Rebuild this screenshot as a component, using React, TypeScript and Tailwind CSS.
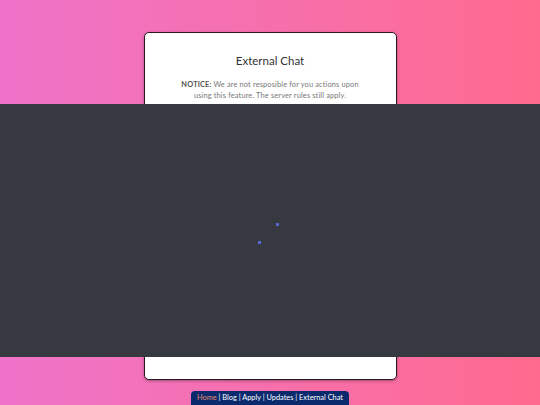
export default function App() {
  return (
    <div
      className="relative h-[405px] w-[540px] overflow-hidden bg-gradient-to-r from-[#ee73c9] to-[#ff6a8e]"
      style={{ fontFamily: 'Lato, "Noto Sans", sans-serif' }}
    >
      <div className="flex flex-col items-center pt-[32px]">
        {/* card */}
        <div className="h-[348px] w-[253px] rounded-[5px] border-[1.5px] border-[#2a1724] bg-white px-[28px] pt-[21px] text-center shadow-[0_1px_3px_rgba(0,0,0,0.35)]">
          <h1 className="text-[11.5px] leading-[14px] text-[#333]">External Chat</h1>
          <p className="mt-[11px] text-[7.4px] leading-[11px] tracking-[0.15px] text-[#777]">
            <span className="font-bold text-[#555]">NOTICE:</span> We are not resposible for you actions upon using this feature. The server rules still apply.
          </p>
        </div>

        {/* footer nav */}
        <div className="mt-[11px] flex h-[16px] items-start rounded-t-[4px] bg-[#0b2a6e] px-[6px] pt-[2px] text-[7.4px] leading-[10px] text-white">
          <span className="text-[#e2876a]">Home</span>
          <span>&nbsp;| Blog | Apply | Updates | External Chat</span>
        </div>
      </div>

      {/* embedded chat overlay */}
      <div className="absolute left-0 top-[104px] h-[253px] w-full bg-[#36393f]">
        <div className="absolute left-[276px] top-[119px] h-[3px] w-[3px] bg-[#5b66d6]" />
        <div className="absolute left-[258px] top-[137px] h-[3px] w-[3px] bg-[#5b66d6]" />
      </div>
    </div>
  );
}
